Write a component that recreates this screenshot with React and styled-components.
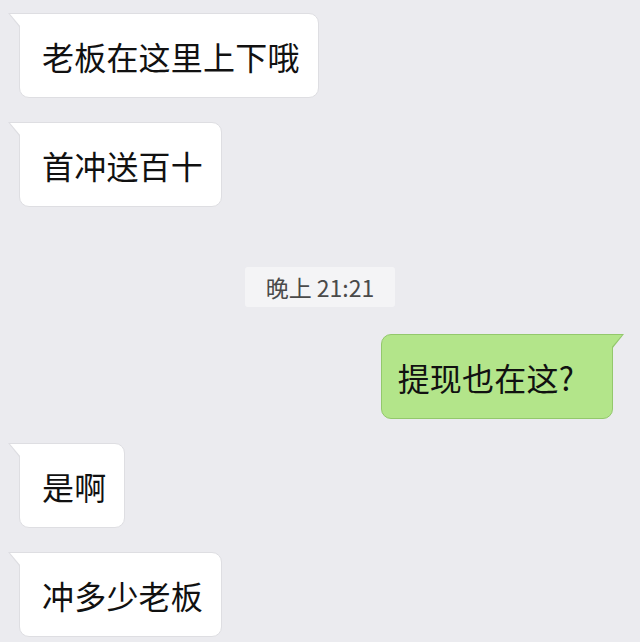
import React from "react";
import styled, { createGlobalStyle, css } from "styled-components";

const Global = createGlobalStyle`
  html, body { margin: 0; padding: 0; background: #ebebef; }
  body { font-family: "Noto Sans CJK SC", "Noto Sans", sans-serif; }
`;

const Page = styled.div`
  width: 640px;
  height: 642px;
  box-sizing: border-box;
  padding: 13px 27px 0 19px;
  display: flex;
  flex-direction: column;
  background: #ebebef;
  overflow: hidden;
`;

const Row = styled.div`
  display: flex;
  justify-content: ${(p) => (p.$mine ? "flex-end" : p.$center ? "center" : "flex-start")};
  margin-top: ${(p) => p.$gap || 0}px;
  ${(p) => p.$center && css`padding-left: 8px;`}
`;

const Bubble = styled.div`
  position: relative;
  height: 85px;
  box-sizing: border-box;
  display: flex;
  align-items: center;
  padding: ${(p) => (p.$mine ? "0 38px 0 16px" : "0 18px 0 22px")};
  font-size: 32px;
  color: #111;
  letter-spacing: 0.2px;
  border-radius: 10px;
  border-top-${(p) => (p.$mine ? "right" : "left")}-radius: 0;
  background: ${(p) => (p.$mine ? "#b3e58a" : "#ffffff")};
  border: 1px solid ${(p) => (p.$mine ? "#93c86c" : "#dedee2")};

  &::before,
  &::after {
    content: "";
    position: absolute;
    top: -1px;
    width: 12px;
    height: 15px;
  }
  &::before {
    background: ${(p) => (p.$mine ? "#93c86c" : "#dedee2")};
    ${(p) =>
      p.$mine
        ? css`right: -12px; clip-path: polygon(0 0, 100% 0, 0 100%);`
        : css`left: -12px; clip-path: polygon(0 0, 100% 0, 100% 100%);`}
  }
  &::after {
    background: ${(p) => (p.$mine ? "#b3e58a" : "#ffffff")};
    top: 0;
    ${(p) =>
      p.$mine
        ? css`right: -10px; width: 11px; height: 13px; clip-path: polygon(0 0, 100% 0, 0 100%);`
        : css`left: -10px; width: 11px; height: 13px; clip-path: polygon(0 0, 100% 0, 100% 100%);`}
  }
`;

const Time = styled.div`
  height: 40px;
  box-sizing: border-box;
  padding: 0 21px;
  display: flex;
  align-items: center;
  background: #f4f4f6;
  border-radius: 3px;
  font-size: 23px;
  color: #4a4a4a;
  font-family: "Noto Sans CJK SC", "Noto Sans", sans-serif;
`;

const messages = [
  { text: "老板在这里上下哦", gap: 0 },
  { text: "首冲送百十", gap: 24 },
  { time: "晚上 21:21", gap: 60 },
  { text: "提现也在这?", mine: true, gap: 27 },
  { text: "是啊", gap: 24 },
  { text: "冲多少老板", gap: 24 },
];

export default function App() {
  return (
    <>
      <Global />
      <Page>
        {messages.map((m, i) =>
          m.time ? (
            <Row key={i} $center $gap={m.gap}>
              <Time>{m.time}</Time>
            </Row>
          ) : (
            <Row key={i} $mine={m.mine} $gap={m.gap}>
              <Bubble $mine={m.mine}>{m.text}</Bubble>
            </Row>
          )
        )}
      </Page>
    </>
  );
}
